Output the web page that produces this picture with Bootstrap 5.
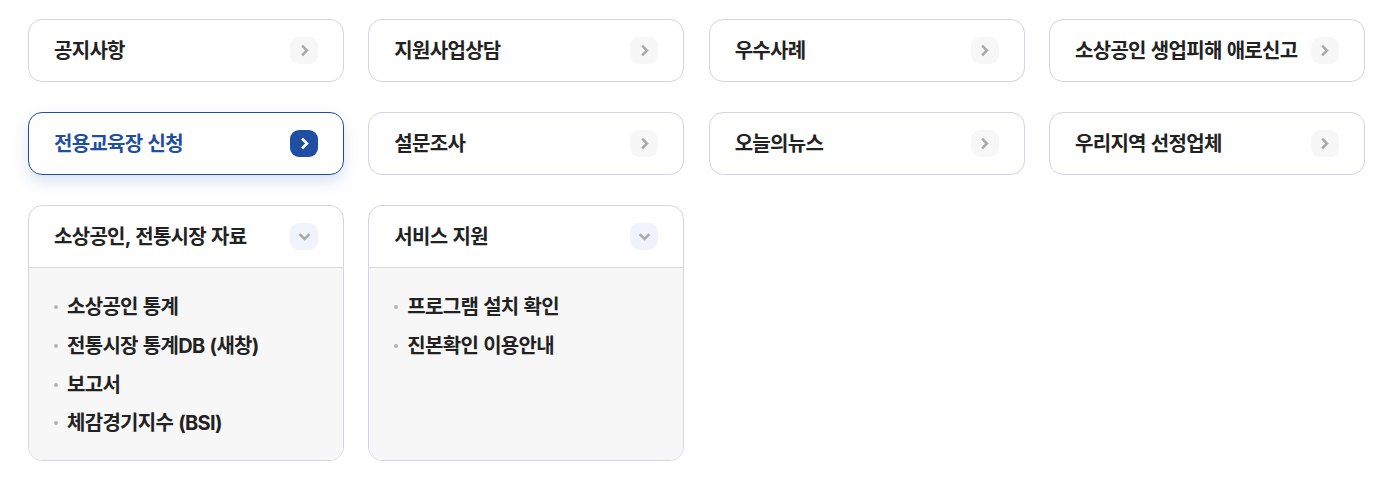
<!DOCTYPE html>
<html lang="ko">
<head>
<meta charset="utf-8">
<title>바로가기</title>
<link href="https://cdn.jsdelivr.net/npm/bootstrap@5.3.0/dist/css/bootstrap.min.css" rel="stylesheet">
<style>
body{background:#fff;font-family:Inter,"Noto Sans CJK KR","Noto Sans",sans-serif;color:#222;overflow:hidden}
.tile-grid{display:grid;grid-template-columns:repeat(4,316px);column-gap:24.33px;row-gap:30px;padding:19px 25px 0 28px;align-items:start}
.tile{border:1px solid #d4d4e2;border-radius:14px;background:#fff;overflow:hidden}
.tile-head{height:61px;padding:0 25px;font-size:20px;font-weight:700;letter-spacing:-.7px;word-spacing:1px;color:#222;text-decoration:none;white-space:nowrap}
.tile-ico{width:28px;height:27px;border-radius:9px;background:#f7f7f8;flex:none}
.tile-ico svg{width:13px;height:13px;fill:none;stroke:#aaa;stroke-width:2.4}
.tile-on{border-color:#1f4ea3;box-shadow:0 7px 16px rgba(31,78,163,.16)}
.tile-on .tile-head{color:#1f4ea3}
.tile-on .tile-ico{background:#1f4ea3}
.tile-on .tile-ico svg{stroke:#fff;stroke-width:2.6}
.tile-open{height:256px;display:flex;flex-direction:column}
.tile-open .tile-head{flex:none;border-bottom:1px solid #d8d8e4;height:62px;box-shadow:0 1px 2px rgba(0,0,0,.04)}
.tile-open .tile-ico{background:#f0f3fb}
.tile-sub{flex:1;background:#f7f7f8;list-style:none;margin:0;padding:20px 25px 0}
.tile-sub li{height:38.7px;display:flex;align-items:center;gap:10px;font-size:20px;font-weight:700;letter-spacing:-.7px;word-spacing:1px;color:#222;white-space:nowrap}
.tile-sub li::before{content:"";width:4px;height:4px;border-radius:50%;background:#b4b4b4;flex:none;margin-right:-1px}
</style>
</head>
<body>
<div class="tile-grid">
  <div class="tile"><a class="tile-head d-flex align-items-center justify-content-between" href="#">공지사항<span class="tile-ico d-flex align-items-center justify-content-center"><svg viewBox="0 0 12 12"><path d="M3.8 1.5 8.2 6 3.8 10.5"/></svg></span></a></div>
  <div class="tile"><a class="tile-head d-flex align-items-center justify-content-between" href="#">지원사업상담<span class="tile-ico d-flex align-items-center justify-content-center"><svg viewBox="0 0 12 12"><path d="M3.8 1.5 8.2 6 3.8 10.5"/></svg></span></a></div>
  <div class="tile"><a class="tile-head d-flex align-items-center justify-content-between" href="#">우수사례<span class="tile-ico d-flex align-items-center justify-content-center"><svg viewBox="0 0 12 12"><path d="M3.8 1.5 8.2 6 3.8 10.5"/></svg></span></a></div>
  <div class="tile"><a class="tile-head d-flex align-items-center justify-content-between" href="#">소상공인 생업피해 애로신고<span class="tile-ico d-flex align-items-center justify-content-center"><svg viewBox="0 0 12 12"><path d="M3.8 1.5 8.2 6 3.8 10.5"/></svg></span></a></div>

  <div class="tile tile-on"><a class="tile-head d-flex align-items-center justify-content-between" href="#">전용교육장 신청<span class="tile-ico d-flex align-items-center justify-content-center"><svg viewBox="0 0 12 12"><path d="M3.8 1.5 8.2 6 3.8 10.5"/></svg></span></a></div>
  <div class="tile"><a class="tile-head d-flex align-items-center justify-content-between" href="#">설문조사<span class="tile-ico d-flex align-items-center justify-content-center"><svg viewBox="0 0 12 12"><path d="M3.8 1.5 8.2 6 3.8 10.5"/></svg></span></a></div>
  <div class="tile"><a class="tile-head d-flex align-items-center justify-content-between" href="#">오늘의뉴스<span class="tile-ico d-flex align-items-center justify-content-center"><svg viewBox="0 0 12 12"><path d="M3.8 1.5 8.2 6 3.8 10.5"/></svg></span></a></div>
  <div class="tile"><a class="tile-head d-flex align-items-center justify-content-between" href="#">우리지역 선정업체<span class="tile-ico d-flex align-items-center justify-content-center"><svg viewBox="0 0 12 12"><path d="M3.8 1.5 8.2 6 3.8 10.5"/></svg></span></a></div>

  <div class="tile tile-open"><a class="tile-head d-flex align-items-center justify-content-between" href="#">소상공인, 전통시장 자료<span class="tile-ico d-flex align-items-center justify-content-center"><svg viewBox="0 0 12 12"><path d="M1.5 3.8 6 8.2 10.5 3.8"/></svg></span></a>
    <ul class="tile-sub"><li>소상공인 통계</li><li>전통시장 통계DB (새창)</li><li>보고서</li><li>체감경기지수 (BSI)</li></ul></div>
  <div class="tile tile-open"><a class="tile-head d-flex align-items-center justify-content-between" href="#">서비스 지원<span class="tile-ico d-flex align-items-center justify-content-center"><svg viewBox="0 0 12 12"><path d="M1.5 3.8 6 8.2 10.5 3.8"/></svg></span></a>
    <ul class="tile-sub"><li>프로그램 설치 확인</li><li>진본확인 이용안내</li></ul></div>
</div>
<script src="https://cdn.jsdelivr.net/npm/bootstrap@5.3.0/dist/js/bootstrap.bundle.min.js"></script>
</body>
</html>
